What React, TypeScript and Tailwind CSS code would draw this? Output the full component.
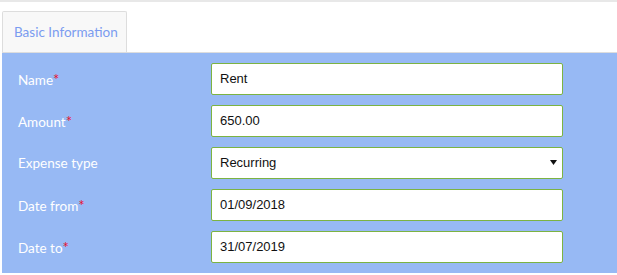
import React from 'react';

const labelFont = { fontFamily: 'Lato, "Open Sans", sans-serif' };

type Field = {
  label: string;
  value: string;
  required?: boolean;
  select?: boolean;
};

const fields: Field[] = [
  { label: 'Name', value: 'Rent', required: true },
  { label: 'Amount', value: '650.00', required: true },
  { label: 'Expense type', value: 'Recurring', select: true },
  { label: 'Date from', value: '01/09/2018', required: true },
  { label: 'Date to', value: '31/07/2019', required: true },
];

const Row = ({ field }: { field: Field }) => (
  <div className="flex items-center h-[32px] mb-[10px] last:mb-0">
    <div
      className="w-[209px] pl-[16px] text-[13.5px] text-white"
      style={labelFont}
    >
      {field.label}
      {field.required && <span className="text-[#e8102c] text-[15px]">*</span>}
    </div>
    <div className="w-[352px] h-[32px] bg-white border border-[#7cb342] rounded-[2px] flex items-center pl-[8px] pr-[5px]">
      <span
        className="flex-1 text-[13px] text-[#111]"
        style={{ fontFamily: '"Liberation Sans", Arial, sans-serif' }}
      >
        {field.value}
      </span>
      {field.select && (
        <svg width="7" height="5" viewBox="0 0 7 5" className="mb-[1px]">
          <path d="M0 0h7L3.5 5z" fill="#111" />
        </svg>
      )}
    </div>
  </div>
);

export default function App() {
  return (
    <div className="w-[617px] h-[275px] bg-white border-t-2 border-[#e8e8e8]">
      <div className="pl-[2px] pt-[9px]">
        <div
          className="w-[125px] h-[41px] border border-b-0 border-[#dddddd] bg-[#f8f8f8] rounded-t-[2px] flex items-center pl-[11px] text-[13.5px] text-[#7b9cf0]"
          style={labelFont}
        >
          Basic Information
        </div>
        <div className="border-t border-[#dddddd] bg-[#97b9f4] pt-[10px] pb-[10px]">
          {fields.map((f) => (
            <Row key={f.label} field={f} />
          ))}
        </div>
      </div>
    </div>
  );
}
